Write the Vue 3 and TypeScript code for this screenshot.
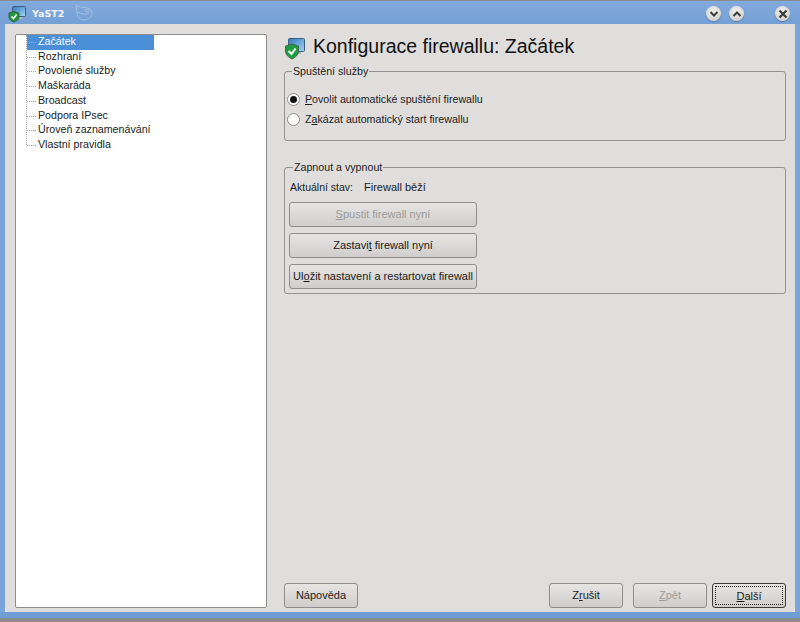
<script setup lang="ts">
const items: string[] = ['Začátek', 'Rozhraní', 'Povolené služby', 'Maškaráda', 'Broadcast', 'Podpora IPsec', 'Úroveň zaznamenávání', 'Vlastní pravidla']
</script>

<template>
  <div class="win">
    <header class="title">
      <svg class="appicon" width="18" height="18" viewBox="0 0 18 18">
        <defs>
          <linearGradient id="screenA" x1="0" y1="0" x2="1" y2="1">
            <stop offset="0" stop-color="#2f78bd" />
            <stop offset="1" stop-color="#a6d6f6" />
          </linearGradient>
        </defs>
        <rect x="4.500" y="1.500" width="13" height="10" rx="1" fill="url(#screenA)" stroke="#3d5f80" />
        <rect x="9" y="12" width="6" height="2" fill="#aab4bd" />
        <path d="M1 8 L6 6.500 L11 8 V12 C11 14.500 8.500 16 6 17 C3.500 16 1 14.500 1 12 Z" fill="#1e9a3c" stroke="#35513a" stroke-width=".8" />
        <path d="M3.500 11.500 L5.500 13.500 L8.500 9.500" fill="none" stroke="#fff" stroke-width="1.600" />
      </svg>
      <span class="apptitle">YaST2</span>
      <svg class="gecko" width="18" height="17" viewBox="0 0 18 17" fill="none" stroke="#a8c3e6" stroke-width=".9">
        <path d="M1 1 C4 3 6 3.500 10 3.500 C14 3.500 17 6 17 9.500 C17 13 13 16 9 16 C5 16 2.500 13 2 9 C1.800 6 1.500 4 1 1 Z" />
        <path d="M3 8 C6 10 10 11 14 9" />
        <ellipse cx="12" cy="6.500" rx="1.800" ry="1.300" />
      </svg>
      <div class="controls">
        <span class="wbtn">
          <svg width="10" height="8" viewBox="0 0 10 8"><path d="M1.500 2 L5 5.500 L8.500 2" fill="none" stroke="#3c3c3c" stroke-width="2" /></svg>
        </span>
        <span class="wbtn">
          <svg width="10" height="8" viewBox="0 0 10 8"><path d="M1.500 6 L5 2.500 L8.500 6" fill="none" stroke="#3c3c3c" stroke-width="2" /></svg>
        </span>
        <span class="wbtn close">
          <svg width="10" height="10" viewBox="0 0 10 10"><path d="M1.500 1.500 L8.500 8.500 M8.500 1.500 L1.500 8.500" fill="none" stroke="#3c3c3c" stroke-width="2.200" /></svg>
        </span>
      </div>
    </header>

    <main class="body">
      <aside class="tree">
        <ul class="list">
          <li v-for="(item, i) in items" :key="item" class="row">
            <span class="tick"></span>
            <span class="label" :class="{ sel: i === 0 }">{{ item }}</span>
          </li>
        </ul>
      </aside>

      <section class="panel">
        <div class="heading">
          <svg class="headicon" width="23" height="24" viewBox="0 0 23 24">
            <defs>
              <linearGradient id="screenB" x1="0" y1="0" x2="1" y2="1">
                <stop offset="0" stop-color="#2f78bd" />
                <stop offset="1" stop-color="#a6d6f6" />
              </linearGradient>
            </defs>
            <rect x="4.500" y="2.500" width="16" height="13" rx="1" fill="url(#screenB)" stroke="#3d5f80" />
            <rect x="10" y="16" width="7" height="2" fill="#aab4bd" />
            <path d="M1.500 10 L8 8 L14.500 10 V15 C14.500 19 11 21.500 8 23 C5 21.500 1.500 19 1.500 15 Z" fill="#1f9e3f" stroke="#4a6650" />
            <path d="M4.500 15 L7.500 18 L11.500 12.500" fill="none" stroke="#fff" stroke-width="2" />
          </svg>
          <h1>Konfigurace firewallu: Začátek</h1>
        </div>

        <fieldset class="group first">
          <legend>Spuštění služby</legend>
          <div class="radio">
            <span class="dot on"></span>
            <span><u>P</u>ovolit automatické spuštění firewallu</span>
          </div>
          <div class="radio">
            <span class="dot"></span>
            <span>Z<u>a</u>kázat automatický start firewallu</span>
          </div>
        </fieldset>

        <fieldset class="group second">
          <legend>Zapnout a vypnout</legend>
          <div class="state"><span>Aktuální stav:</span><span class="value">Firewall běží</span></div>
          <div class="actions">
            <button class="btn off" type="button"><u>S</u>pustit firewall nyní</button>
            <button class="btn" type="button">Zastavi<u>t</u> firewall nyní</button>
            <button class="btn" type="button">Ul<u>o</u>žit nastavení a restartovat firewall</button>
          </div>
        </fieldset>

        <footer class="footer">
          <button class="btn foot" type="button">Nápověda</button>
          <div class="right">
            <button class="btn foot" type="button">Z<u>r</u>ušit</button>
            <button class="btn foot off" type="button"><u>Z</u>pět</button>
            <button class="btn foot default" type="button"><span class="focus"><u>D</u>alší</span></button>
          </div>
        </footer>
      </section>
    </main>
    <div class="bottom"></div>
  </div>
</template>

<style>
html, body { margin: 0; background: #dfdedc; }
</style>

<style scoped>
.win {
  width: 800px;
  height: 622px;
  box-sizing: border-box;
  display: flex;
  flex-direction: column;
  overflow: hidden;
  background: #7ba5da;
  border-top: 1px solid #8c8c8c;
  font-family: "Liberation Sans", Arial, sans-serif;
  font-size: 10.67px;
  color: #1c1c1c;
}
.title {
  height: 23px;
  flex: none;
  box-sizing: border-box;
  display: flex;
  align-items: center;
  padding: 2px 10px 0 8px;
  background: linear-gradient(#83aadd, #74a0d6);
}
.appicon { flex: none; margin-right: 6px; }
.apptitle { font-weight: bold; font-size: 9.5px; color: #f2f6fc; font-family: "DejaVu Sans", sans-serif; }
.gecko { margin-left: 11px; margin-top: -3px; }
.controls { margin-left: auto; display: flex; gap: 8px; }
.wbtn {
  width: 15px;
  height: 15px;
  border-radius: 50%;
  display: flex;
  align-items: center;
  justify-content: center;
  background: radial-gradient(circle at 50% 35%, #f2f1ef, #c8c8c6);
  box-shadow: 0 1px 1px #5c7ea8;
}
.close { margin-left: 23px; }
.body {
  flex: 1;
  min-height: 0;
  display: flex;
  margin: 0 5px;
  padding: 10px 9px 4px 10px;
  gap: 17px;
  background: #dfdedc;
}
.tree {
  width: 252px;
  flex: none;
  box-sizing: border-box;
  background: #fff;
  border: 1px solid #8e8e8c;
  border-radius: 2px;
}
.list {
  list-style: none;
  margin: 0;
  padding: 0;
  position: relative;
}
.list::before {
  content: "";
  position: absolute;
  left: 10px;
  top: 0;
  height: 110px;
  border-left: 1px dotted #a5a5a5;
}
.row {
  height: 14.75px;
  display: flex;
  align-items: center;
  padding-left: 11px;
}
.tick { width: 9px; flex: none; border-top: 1px dotted #a5a5a5; position: relative; z-index: 1; }
.label { line-height: 13px; padding-left: 2px; padding-bottom: 2px; white-space: nowrap; }
.label.sel { background: #4a8fd8; color: #f4f8fd; width: 116px; margin-left: -9px; padding-left: 11px; box-sizing: content-box; }
.panel {
  flex: 1;
  min-width: 0;
  display: flex;
  flex-direction: column;
}
.heading {
  height: 26px;
  box-sizing: border-box;
  display: flex;
  align-items: center;
  gap: 6px;
  margin-bottom: 5px;
}
.headicon { flex: none; margin-top: 2px; }
h1 { margin: -2px 0 0; font-size: 19.5px; font-weight: normal; color: #111; white-space: nowrap; }
.group {
  margin: 0;
  padding: 0;
  border: 1px solid #929290;
  border-radius: 3px;
  min-width: 0;
}
.group legend { padding: 0 1px; line-height: 12px; }
.first { height: 76px; box-sizing: border-box; padding: 12px 0 0 2px; }
.first legend { margin-left: 5px; }
.second { margin-top: 20px; height: 133px; box-sizing: border-box; padding: 7px 4px 0 4px; }
.second legend { margin-left: 4px; }
.radio { display: flex; align-items: center; gap: 5px; height: 20px; }
.dot {
  width: 11px;
  height: 11px;
  border-radius: 50%;
  background: #fff;
  border: 1px solid #8d8d8b;
  display: flex;
  align-items: center;
  justify-content: center;
  flex: none;
}
.dot.on::after { content: ""; width: 7px; height: 7px; border-radius: 50%; background: #111; }
.state { display: flex; gap: 11px; height: 14px; align-items: center; padding-left: 1px; font-size: 10.5px; }
.value { font-size: 11px; }
.actions { display: flex; flex-direction: column; gap: 6px; width: 188px; margin-top: 8px; }
.btn {
  height: 25px;
  padding: 0 0 1px;
  box-sizing: border-box;
  border: 1px solid #8e8e8c;
  border-radius: 3px;
  background: linear-gradient(#e6e5e3, #cfcecc);
  font: inherit;
  font-size: 11px;
  color: #1c1c1c;
  white-space: nowrap;
}
.off { color: #9c9c9a; }
.footer {
  margin-top: auto;
  display: flex;
  justify-content: space-between;
}
.foot { width: 74px; }
.right { display: flex; gap: 10px; }
.right .default { margin-left: -5px; border: 1px solid #3c3c3a; padding: 2px; }
.focus {
  display: flex;
  height: 100%;
  align-items: center;
  justify-content: center;
  border: 1px dotted #222;
  box-sizing: border-box;
}
.bottom { height: 10px; flex: none; background: #6f9dd6; box-shadow: inset 0 -4px 0 #8c8c8c; }
</style>
